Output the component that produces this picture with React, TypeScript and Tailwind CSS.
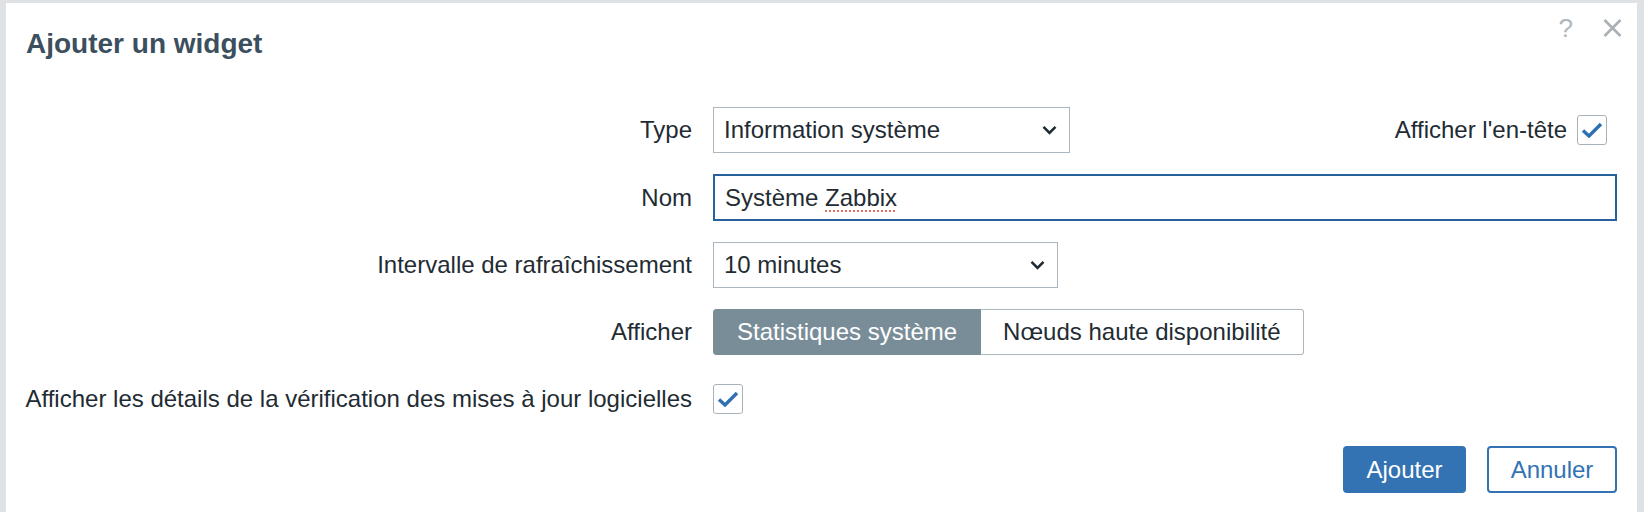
export default function App() {
  return (
    <div className="w-[1644px] h-[512px] overflow-hidden bg-[#dfe2e5] pt-[3px] pl-[6px] pr-[7px] font-['Liberation_Sans',Arial,sans-serif] text-[#1f2c33]">
      <div className="bg-white h-[540px] px-[20px]">
        {/* Header */}
        <div className="flex justify-between h-[104px]">
          <h1 className="pt-[25px] text-[28px] leading-[32px] font-bold text-[#3c4f5e]">Ajouter un widget</h1>
          <div className="flex items-center gap-[30px] h-[20px] mt-[15px] -mr-[5px]">
            <span className="text-[26px] leading-[20px] text-[#aeb6bc]">?</span>
            <svg width="19" height="18" viewBox="0 0 19 18" className="text-[#a9b1b7]">
              <path d="M1.5 1 L17.5 17 M17.5 1 L1.5 17" stroke="currentColor" strokeWidth="2.6" fill="none" />
            </svg>
          </div>
        </div>

        {/* Form */}
        <div className="grid grid-cols-[666px_1fr] gap-x-[21px] gap-y-[21px] text-[24px] leading-[28px]">
          <Label>Type</Label>
          <div className="flex items-center h-[46px]">
            <Select value="Information système" width="w-[357px]" />
            <div className="ml-auto mr-[10px] flex items-center gap-[10px]">
              <span className="whitespace-nowrap">Afficher l'en-tête</span>
              <Checkbox />
            </div>
          </div>

          <Label>Nom</Label>
          <div className="h-[47px] border-2 border-[#27619c] flex items-center pl-[10px]">
            <span className="whitespace-nowrap">
              Système{" "}
              <span className="underline decoration-dotted decoration-[#e8705f] decoration-2 underline-offset-[5px]">Zabbix</span>
            </span>
          </div>

          <Label>Intervalle de rafraîchissement</Label>
          <div className="flex items-center h-[46px]">
            <Select value="10 minutes" width="w-[345px]" />
          </div>

          <Label>Afficher</Label>
          <div className="flex items-center h-[46px]">
            <div className="flex h-[46px]">
              <div className="flex items-center px-[23px] bg-[#798d99] border border-[#798d99] text-white rounded-l-[3px] whitespace-nowrap">
                Statistiques système
              </div>
              <div className="flex items-center px-[22px] border border-l-0 border-[#acb6bf] rounded-r-[3px] whitespace-nowrap">
                Nœuds haute disponibilité
              </div>
            </div>
          </div>

          <Label>Afficher les détails de la vérification des mises à jour logicielles</Label>
          <div className="flex items-center h-[46px]">
            <Checkbox />
          </div>
        </div>

        {/* Footer buttons */}
        <div className="flex justify-end gap-[21px] mt-[24px] text-[24px]">
          <button className="w-[123px] h-[47px] rounded-[4px] bg-[#3372b3] text-white">Ajouter</button>
          <button className="w-[130px] h-[47px] rounded-[4px] border-2 border-[#3372b3] bg-white text-[#3372b3]">Annuler</button>
        </div>
      </div>
    </div>
  );
}

function Label({ children }: { children: React.ReactNode }) {
  return <div className="flex items-center justify-end whitespace-nowrap h-full">{children}</div>;
}

function Select({ value, width }: { value: string; width: string }) {
  return (
    <div className={`${width} h-[46px] border border-[#acb6bf] flex items-center justify-between pl-[10px] pr-[12px]`}>
      <span className="whitespace-nowrap">{value}</span>
      <svg width="15" height="10" viewBox="0 0 15 10">
        <path d="M1.5 1.8 L7.5 7.8 L13.5 1.8" stroke="#1f2c33" strokeWidth="2.6" fill="none" />
      </svg>
    </div>
  );
}

function Checkbox() {
  return (
    <div className="w-[30px] h-[30px] border border-[#a8b2bb] rounded-[3px] flex items-center justify-center">
      <svg width="22" height="16" viewBox="0 0 22 16">
        <path d="M2 8.5 L8 14 L20 2" stroke="#2f6fb2" strokeWidth="3.4" fill="none" />
      </svg>
    </div>
  );
}
